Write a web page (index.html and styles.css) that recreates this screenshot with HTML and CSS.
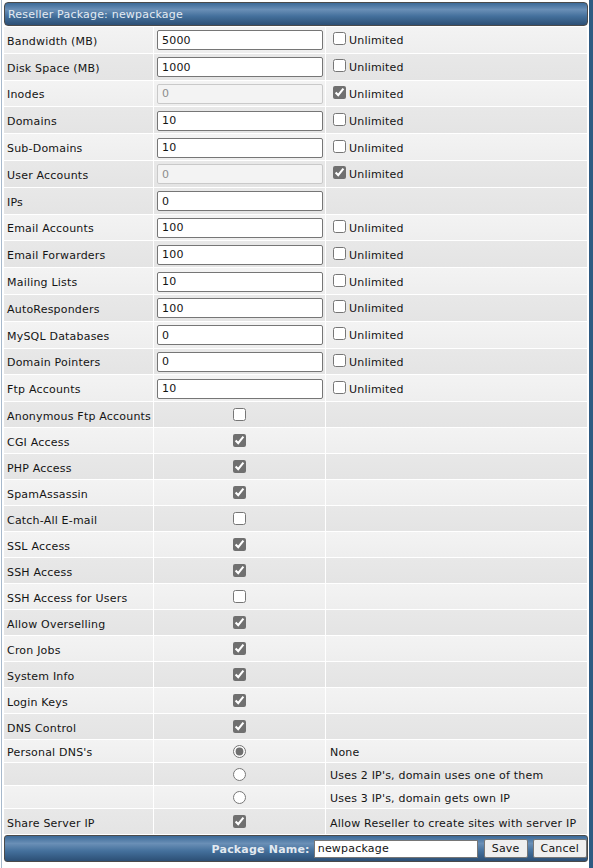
FILE: index.html
```html
<!DOCTYPE html>
<html>
<head>
<meta charset="utf-8">
<title>Reseller Package</title>
<link rel="stylesheet" href="styles.css">
</head>
<body>
<div class="page">
  <div class="bar head">Reseller Package: newpackage</div>
  <table class="grid">
    <colgroup><col class="c1"><col class="c2"><col class="c3"></colgroup>
    <tr class="in l"><td>Bandwidth (MB)</td><td><input class="txt" type="text" value="5000"></td><td><label><input type="checkbox"><span>Unlimited</span></label></td></tr>
    <tr class="in d"><td>Disk Space (MB)</td><td><input class="txt" type="text" value="1000"></td><td><label><input type="checkbox"><span>Unlimited</span></label></td></tr>
    <tr class="in l"><td>Inodes</td><td><input class="txt" type="text" value="0" disabled></td><td><label><input type="checkbox" checked><span>Unlimited</span></label></td></tr>
    <tr class="in d"><td>Domains</td><td><input class="txt" type="text" value="10"></td><td><label><input type="checkbox"><span>Unlimited</span></label></td></tr>
    <tr class="in l"><td>Sub-Domains</td><td><input class="txt" type="text" value="10"></td><td><label><input type="checkbox"><span>Unlimited</span></label></td></tr>
    <tr class="in d"><td>User Accounts</td><td><input class="txt" type="text" value="0" disabled></td><td><label><input type="checkbox" checked><span>Unlimited</span></label></td></tr>
    <tr class="in d"><td>IPs</td><td><input class="txt" type="text" value="0"></td><td></td></tr>
    <tr class="in l"><td>Email Accounts</td><td><input class="txt" type="text" value="100"></td><td><label><input type="checkbox"><span>Unlimited</span></label></td></tr>
    <tr class="in d"><td>Email Forwarders</td><td><input class="txt" type="text" value="100"></td><td><label><input type="checkbox"><span>Unlimited</span></label></td></tr>
    <tr class="in l"><td>Mailing Lists</td><td><input class="txt" type="text" value="10"></td><td><label><input type="checkbox"><span>Unlimited</span></label></td></tr>
    <tr class="in d"><td>AutoResponders</td><td><input class="txt" type="text" value="100"></td><td><label><input type="checkbox"><span>Unlimited</span></label></td></tr>
    <tr class="in l"><td>MySQL Databases</td><td><input class="txt" type="text" value="0"></td><td><label><input type="checkbox"><span>Unlimited</span></label></td></tr>
    <tr class="in d"><td>Domain Pointers</td><td><input class="txt" type="text" value="0"></td><td><label><input type="checkbox"><span>Unlimited</span></label></td></tr>
    <tr class="in l"><td>Ftp Accounts</td><td><input class="txt" type="text" value="10"></td><td><label><input type="checkbox"><span>Unlimited</span></label></td></tr>
    <tr class="ck d"><td>Anonymous Ftp Accounts</td><td class="mid"><input type="checkbox"></td><td></td></tr>
    <tr class="ck l"><td>CGI Access</td><td class="mid"><input type="checkbox" checked></td><td></td></tr>
    <tr class="ck d"><td>PHP Access</td><td class="mid"><input type="checkbox" checked></td><td></td></tr>
    <tr class="ck l"><td>SpamAssassin</td><td class="mid"><input type="checkbox" checked></td><td></td></tr>
    <tr class="ck d"><td>Catch-All E-mail</td><td class="mid"><input type="checkbox"></td><td></td></tr>
    <tr class="ck l"><td>SSL Access</td><td class="mid"><input type="checkbox" checked></td><td></td></tr>
    <tr class="ck d"><td>SSH Access</td><td class="mid"><input type="checkbox" checked></td><td></td></tr>
    <tr class="ck l"><td>SSH Access for Users</td><td class="mid"><input type="checkbox"></td><td></td></tr>
    <tr class="ck d"><td>Allow Overselling</td><td class="mid"><input type="checkbox" checked></td><td></td></tr>
    <tr class="ck l"><td>Cron Jobs</td><td class="mid"><input type="checkbox" checked></td><td></td></tr>
    <tr class="ck d"><td>System Info</td><td class="mid"><input type="checkbox" checked></td><td></td></tr>
    <tr class="ck l"><td>Login Keys</td><td class="mid"><input type="checkbox" checked></td><td></td></tr>
    <tr class="ck d"><td>DNS Control</td><td class="mid"><input type="checkbox" checked></td><td></td></tr>
    <tr class="rd l"><td>Personal DNS's</td><td class="mid"><input type="radio" name="dns" checked></td><td class="note">None</td></tr>
    <tr class="rd d"><td></td><td class="mid"><input type="radio" name="dns"></td><td class="note">Uses 2 IP's, domain uses one of them</td></tr>
    <tr class="rd l"><td></td><td class="mid"><input type="radio" name="dns"></td><td class="note">Uses 3 IP's, domain gets own IP</td></tr>
    <tr class="ck d"><td>Share Server IP</td><td class="mid"><input type="checkbox" checked></td><td class="note">Allow Reseller to create sites with server IP</td></tr>
  </table>
  <div class="bar foot">
    <span class="pn">Package Name:</span>
    <input class="name" type="text" value="newpackage">
    <button class="btn" type="button">Save</button>
    <button class="btn" type="button">Cancel</button>
  </div>
</div>
</body>
</html>
```

FILE: styles.css
```css
html, body {
  margin: 0;
  padding: 0;
  background: #ffffff;
}
body {
  font-family: "DejaVu Sans", Verdana, sans-serif;
  font-size: 11px;
  letter-spacing: 0.2px;
  color: #141414;
}
.page {
  margin-left: 1px;
  border-left: 1px solid #a7b9cc;
  border-right: 4px solid #2e5a82;
  padding-top: 2px;
  min-height: 868px;
  box-sizing: border-box;
}
.bar {
  margin: 0 1px 0 2px;
  border: 1px solid #4a4a4a;
  border-radius: 4px;
  background: linear-gradient(#3c6a98 0%, #6a8fb6 30%, #44709c 60%, #2c4f75 100%);
  box-sizing: border-box;
  color: #e4ebf2;
}
.head {
  height: 24px;
  padding: 1px 0 0 3px;
  display: flex;
  align-items: center;
}
.grid {
  margin: 0 0 0 1px;
  width: calc(100% - 2px);
  border-collapse: separate;
  border-spacing: 1px;
  table-layout: fixed;
  background: #ffffff;
}
.c1 { width: 149px; }
.c2 { width: 171px; }
.grid td {
  padding: 3px 3px 0 3px;
  vertical-align: middle;
  white-space: nowrap;
}
.grid tr.l td { background: linear-gradient(#f3f3f3, #eeeeee); }
.grid tr.d td { background: linear-gradient(#e8e8e8, #e4e4e4); }
.grid tr.in td { height: 22.8px; }
.grid tr.ck td { height: 22px; }
.grid tr.rd td { height: 19px; }
.grid td.mid {
  text-align: center;
  padding: 0;
  line-height: 0;
}
.grid tr.in td:nth-child(2),
.grid tr.in td:nth-child(3) {
  padding-top: 0;
  height: 25.8px;
}
.grid td.note { padding-left: 4px; }
.txt {
  box-sizing: border-box;
  width: 166px;
  height: 20px;
  margin: 1px 0 0 0;
  padding: 0 4px;
  border: 1px solid #767676;
  border-radius: 2px;
  background: #ffffff;
  font-family: "DejaVu Sans", Verdana, sans-serif;
  font-size: 11px;
  letter-spacing: 0.2px;
  color: #141414;
  display: block;
}
.txt:disabled {
  background: #f3f3f3;
  border-color: #c9c9c9;
  color: #8d8d8d;
}
label {
  display: inline-flex;
  align-items: center;
  margin-top: 1px;
}
label input {
  margin: 0 3px 0 4px;
}
label span {
  position: relative;
  top: 2px;
}
input[type="checkbox"], input[type="radio"] {
  accent-color: #707070;
  width: 13px;
  height: 13px;
}
td.mid input {
  margin: 0;
  vertical-align: middle;
}
.foot {
  height: 27px;
  margin-top: 0;
  display: flex;
  align-items: center;
  justify-content: flex-end;
  padding: 0;
  border-radius: 3px;
}
.pn {
  font-weight: bold;
  color: #e2e9f0;
  margin-right: 4px;
  position: relative;
  top: 1px;
}
.name {
  box-sizing: border-box;
  width: 164px;
  height: 18px;
  margin: 0 6px 0 0;
  padding: 0 3px;
  border: 1px solid #767676;
  border-radius: 0;
  font-family: "DejaVu Sans", Verdana, sans-serif;
  font-size: 11px;
  letter-spacing: 0.2px;
  color: #141414;
  background: #fff;
}
.btn {
  box-sizing: border-box;
  height: 19px;
  margin: 0;
  padding: 0 7px;
  border: 1px solid #767676;
  border-radius: 2px;
  background: #efefef;
  font-family: "DejaVu Sans", Verdana, sans-serif;
  font-size: 11px;
  letter-spacing: 0.2px;
  color: #141414;
}
.btn + .btn { margin-left: 5px; }
```
